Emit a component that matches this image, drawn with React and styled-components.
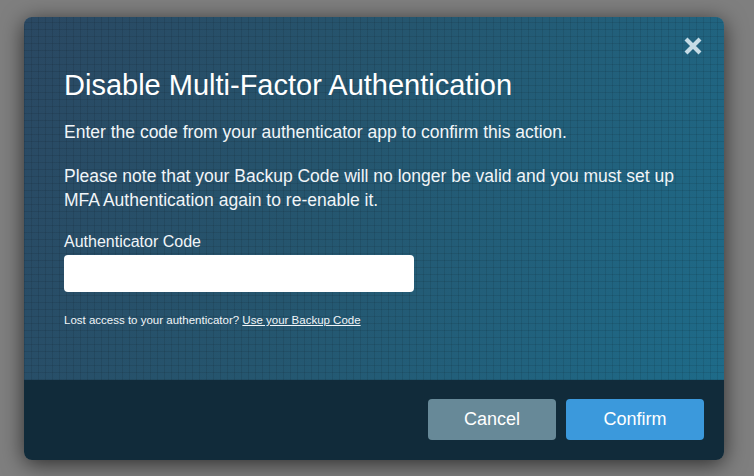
import React from "react";
import styled, { createGlobalStyle } from "styled-components";

const GlobalStyle = createGlobalStyle`
  * { box-sizing: border-box; }
  html, body { margin: 0; padding: 0; }
  body {
    font-family: "Liberation Sans", Arial, sans-serif;
    background: #7f7f7f;
  }
`;

const Overlay = styled.div`
  width: 754px;
  height: 476px;
  padding: 17px 30px 16px 24px;
  background: #7f7f7f;
`;

const Modal = styled.div`
  position: relative;
  height: 100%;
  display: flex;
  flex-direction: column;
  border-radius: 8px;
  overflow: hidden;
  box-shadow: 0 4px 22px rgba(0, 0, 0, 0.65);
`;

const Body = styled.div`
  flex: 1;
  padding: 51px 40px 0;
  color: #f1f5f8;
  background:
    repeating-linear-gradient(90deg, rgba(0, 0, 0, 0.09) 0 1px, transparent 1px 7px),
    repeating-linear-gradient(0deg, rgba(0, 0, 0, 0.09) 0 1px, transparent 1px 7px),
    linear-gradient(115deg, #2a4862 0%, #25566f 45%, #1e6b89 100%);
`;

const Close = styled.button`
  position: absolute;
  top: 19px;
  right: 21px;
  width: 20px;
  height: 20px;
  padding: 0;
  border: 0;
  background: none;
  cursor: pointer;
  display: flex;
  align-items: center;
  justify-content: center;
`;

const Title = styled.h2`
  margin: 0 0 18px;
  font-size: 29px;
  font-weight: 400;
  line-height: 34px;
  color: #ffffff;
`;

const Text = styled.p`
  margin: 0 0 ${(p) => p.$gap || 14}px;
  font-size: 17.5px;
  line-height: 24px;
  max-width: 622px;
`;

const Label = styled.label`
  display: block;
  margin: 0 0 3px;
  font-size: 16px;
  line-height: 20px;
`;

const Input = styled.input`
  display: block;
  width: 350px;
  height: 37px;
  border: 0;
  border-radius: 4px;
  background: #ffffff;
  font-size: 16px;
  padding: 0 10px;
`;

const Small = styled.p`
  margin: 20px 0 0;
  font-size: 11.5px;
  line-height: 16px;
  a {
    color: inherit;
    text-decoration: underline;
  }
`;

const Footer = styled.div`
  height: 80px;
  flex-shrink: 0;
  background: #112b3a;
  display: flex;
  align-items: center;
  justify-content: flex-end;
  gap: 10px;
  padding: 0 20px 1px;
`;

const Button = styled.button`
  width: ${(p) => p.$w}px;
  height: 41px;
  border: 0;
  border-radius: 4px;
  background: ${(p) => (p.$primary ? "#3b99dc" : "#678998")};
  color: #ffffff;
  font-family: inherit;
  font-size: 18px;
  cursor: pointer;
`;

export default function App() {
  return (
    <>
      <GlobalStyle />
      <Overlay>
        <Modal>
          <Close aria-label="Close">
            <svg width="20" height="20" viewBox="0 0 20 20">
              <path d="M3 3 L17 17 M17 3 L3 17" stroke="#c6dce6" strokeWidth="4.2" strokeLinecap="butt" />
            </svg>
          </Close>
          <Body>
            <Title>Disable Multi-Factor Authentication</Title>
            <Text $gap={20}>Enter the code from your authenticator app to confirm this action.</Text>
            <Text $gap={20}>
              Please note that your Backup Code will no longer be valid and you must set up MFA
              Authentication again to re-enable it.
            </Text>
            <Label htmlFor="code">Authenticator Code</Label>
            <Input id="code" type="text" />
            <Small>
              Lost access to your authenticator? <a href="#backup">Use your Backup Code</a>
            </Small>
          </Body>
          <Footer>
            <Button $w={128}>Cancel</Button>
            <Button $w={138} $primary>Confirm</Button>
          </Footer>
        </Modal>
      </Overlay>
    </>
  );
}
